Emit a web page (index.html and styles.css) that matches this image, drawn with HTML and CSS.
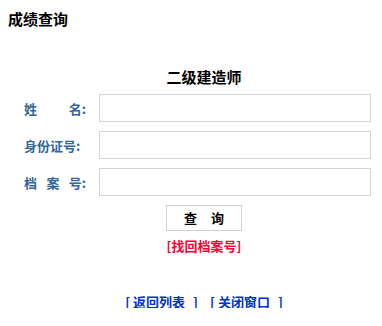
FILE: index.html
```html
<!DOCTYPE html>
<html lang="zh-CN">
<head>
<meta charset="utf-8">
<title>成绩查询</title>
<link rel="stylesheet" href="styles.css">
</head>
<body>
<div class="title">成绩查询</div>
<div class="center subtitle">二级建造师</div>
<form class="form">
  <div class="row">
    <div class="label"><span>姓</span><span>名:</span></div>
    <input class="field" type="text">
  </div>
  <div class="row">
    <div class="label"><span>身份证号:</span></div>
    <input class="field" type="text">
  </div>
  <div class="row">
    <div class="label"><span>档</span><span>案</span><span>号:</span></div>
    <input class="field" type="text">
  </div>
  <div class="center actions">
    <button class="btn" type="button"><span>查</span><span>询</span></button>
  </div>
  <div class="center">
    <a class="find" href="#">[找回档案号]</a>
  </div>
</form>
<div class="center links">
  <a class="link" href="#"><span class="lb">[</span>返回列表<span class="rb">]</span></a>
  <a class="link" href="#"><span class="lb">[</span>关闭窗口<span class="rb">]</span></a>
</div>
</body>
</html>
```
FILE: styles.css
```css
body {
  margin: 8px;
  font-family: "Noto Sans CJK SC", "Liberation Sans", sans-serif;
  font-weight: bold;
  color: #000;
  background: #fff;
}
.title {
  font-size: 15px;
  line-height: 15px;
  margin-top: 3px;
}
.center {
  padding-left: 26px;
  text-align: center;
}
.subtitle {
  font-size: 15px;
  line-height: 15px;
  margin-top: 43px;
}
.form {
  margin: 10px 0 0 0;
  display: flex;
  flex-direction: column;
}
.row {
  display: flex;
  align-items: center;
  height: 28px;
  margin-bottom: 9px;
}
.label {
  width: 62px;
  margin-left: 16px;
  margin-right: 13px;
  display: flex;
  justify-content: space-between;
  font-size: 13px;
  line-height: 13px;
  color: #336699;
}
.field {
  box-sizing: border-box;
  width: 272px;
  height: 28px;
  margin: 0;
  border: 1px solid #d4d4d4;
  padding: 0 4px;
  background: #fff;
  outline: none;
}
.actions {
  margin-top: -1px;
}
.btn {
  box-sizing: border-box;
  width: 76px;
  height: 26px;
  margin: 0;
  padding: 0;
  border: 1px solid #d0d0d0;
  background: #fff;
  font-family: inherit;
  font-weight: bold;
  font-size: 13px;
  line-height: 13px;
  color: #000;
  display: inline-flex;
  justify-content: center;
  align-items: center;
  gap: 14px;
}
.find {
  display: inline-block;
  margin-top: 8px;
  font-size: 13px;
  line-height: 13px;
  color: #ff0033;
  text-decoration: none;
}
.links {
  margin-top: 39px;
  font-size: 13px;
  line-height: 13px;
  display: flex;
  justify-content: center;
  gap: 12px;
}
.link {
  color: #0033cc;
  text-decoration: none;
}
.lb {
  margin-right: 3px;
}
.rb {
  margin-left: 8px;
}
```
